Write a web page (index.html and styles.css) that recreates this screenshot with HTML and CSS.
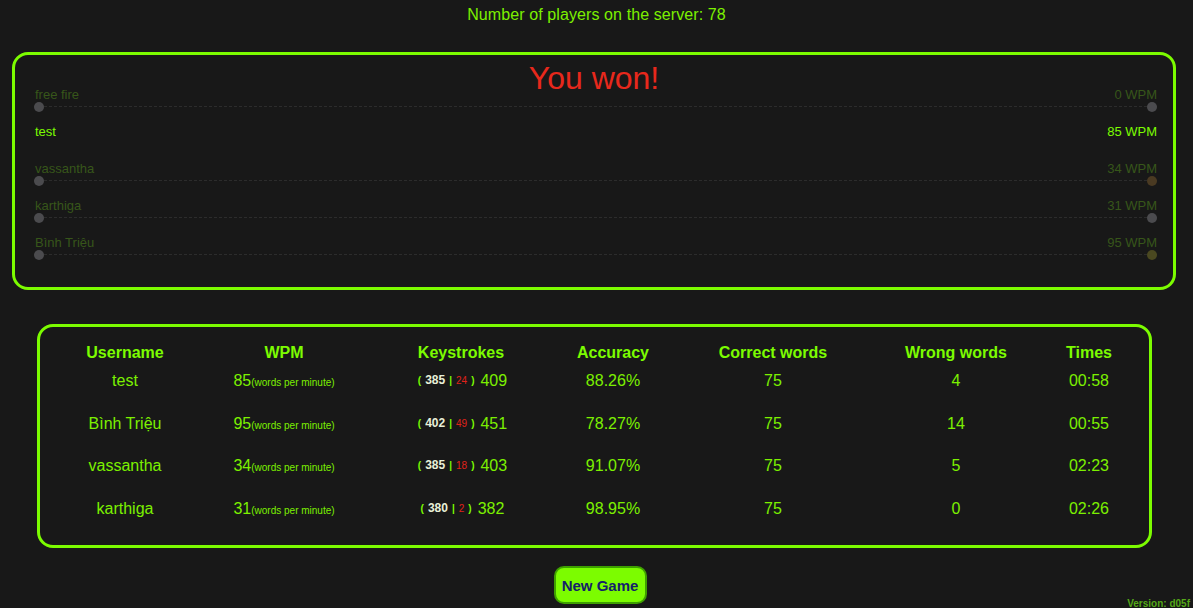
FILE: index.html
```html
<!DOCTYPE html>
<html>
<head>
<meta charset="utf-8">
<link rel="stylesheet" href="styles.css">
</head>
<body>
<div class="page">
  <header class="players">Number of players on the server: 78</header>

  <section class="race">
    <div class="won">You won!</div>
    <div class="lane dim">
      <div class="lane-head"><span>free fire</span><span>0 WPM</span></div>
      <div class="track"><span class="dot grey"></span><span class="dot grey"></span></div>
    </div>
    <div class="lane me">
      <div class="lane-head"><span>test</span><span>85 WPM</span></div>
    </div>
    <div class="lane dim">
      <div class="lane-head"><span>vassantha</span><span>34 WPM</span></div>
      <div class="track"><span class="dot grey"></span><span class="dot brown"></span></div>
    </div>
    <div class="lane dim">
      <div class="lane-head"><span>karthiga</span><span>31 WPM</span></div>
      <div class="track"><span class="dot grey"></span><span class="dot grey"></span></div>
    </div>
    <div class="lane dim">
      <div class="lane-head"><span>Bình Triệu</span><span>95 WPM</span></div>
      <div class="track"><span class="dot grey"></span><span class="dot olive"></span></div>
    </div>
  </section>

  <section class="results">
    <table class="stats">
      <colgroup>
        <col class="c-user"><col class="c-wpm"><col class="c-keys"><col class="c-acc"><col class="c-correct"><col class="c-wrong"><col class="c-time">
      </colgroup>
      <thead>
        <tr><th>Username</th><th>WPM</th><th>Keystrokes</th><th>Accuracy</th><th>Correct words</th><th>Wrong words</th><th>Times</th></tr>
      </thead>
      <tbody>
        <tr>
          <td>test</td>
          <td>85<small>(words per minute)</small></td>
          <td><span class="ks"><i>(</i><b>385</b><i>|</i><em>24</em><i>)</i></span>409</td>
          <td>88.26%</td><td>75</td><td>4</td><td>00:58</td>
        </tr>
        <tr>
          <td>Bình Triệu</td>
          <td>95<small>(words per minute)</small></td>
          <td><span class="ks"><i>(</i><b>402</b><i>|</i><em>49</em><i>)</i></span>451</td>
          <td>78.27%</td><td>75</td><td>14</td><td>00:55</td>
        </tr>
        <tr>
          <td>vassantha</td>
          <td>34<small>(words per minute)</small></td>
          <td><span class="ks"><i>(</i><b>385</b><i>|</i><em>18</em><i>)</i></span>403</td>
          <td>91.07%</td><td>75</td><td>5</td><td>02:23</td>
        </tr>
        <tr>
          <td>karthiga</td>
          <td>31<small>(words per minute)</small></td>
          <td><span class="ks"><i>(</i><b>380</b><i>|</i><em>2</em><i>)</i></span>382</td>
          <td>98.95%</td><td>75</td><td>0</td><td>02:26</td>
        </tr>
      </tbody>
    </table>
  </section>

  <div class="actions">
    <button class="new-game">New Game</button>
  </div>
  <div class="version">Version: d05f</div>
</div>
</body>
</html>
```

FILE: styles.css
```css
html, body {
  margin: 0;
  padding: 0;
  background: #181818;
  height: 100%;
  overflow: hidden;
}
body {
  font-family: "Liberation Sans", Arial, sans-serif;
  color: #7cfc00;
}
.page {
  position: relative;
  height: 608px;
}
.players {
  text-align: center;
  font-size: 16px;
  line-height: 18px;
  padding-top: 6px;
  height: 52px;
  box-sizing: border-box;
  color: #7cf000;
  letter-spacing: 0.1px;
}
.race {
  position: relative;
  margin: 0 17px 0 12px;
  height: 238px;
  box-sizing: border-box;
  border: 3px solid #7cfc00;
  border-radius: 16px;
  padding: 32px 16px 0 19px;
}
.won {
  position: absolute;
  left: 0;
  right: 0;
  top: 3px;
  text-align: center;
  color: #e8281c;
  font-size: 32px;
  line-height: 40px;
}
.lane {
  height: 37px;
}
.lane-head {
  display: flex;
  justify-content: space-between;
  font-size: 13px;
  line-height: 16px;
  padding-left: 1px;
}
.lane.dim .lane-head {
  color: #37561a;
}
.lane.me .lane-head {
  color: #7cfc00;
}
.track {
  position: relative;
  margin-top: -1px;
  height: 10px;
  display: flex;
  justify-content: space-between;
  align-items: center;
}
.track::before {
  content: "";
  position: absolute;
  left: 0;
  right: 0;
  top: 4px;
  border-top: 1px dashed #2c2c2c;
}
.dot {
  position: relative;
  width: 10px;
  height: 10px;
  border-radius: 50%;
}
.dot.grey { background: #4b4b4e; }
.dot.brown { background: #4a3a22; }
.dot.olive { background: #4a4820; }

.results {
  margin: 34px 41px 0 37px;
  height: 224px;
  box-sizing: border-box;
  border: 3px solid #7cfc00;
  border-radius: 16px;
  padding: 15px 13px 0 20px;
}
.stats {
  border-collapse: collapse;
  table-layout: fixed;
  width: 1070px;
}
.c-user { width: 130px; }
.c-wpm { width: 188px; }
.c-keys { width: 166px; }
.c-acc { width: 138px; }
.c-correct { width: 182px; }
.c-wrong { width: 184px; }
.c-time { width: 82px; }
.stats th {
  font-size: 16px;
  font-weight: bold;
  height: 22px;
  padding: 0;
  text-align: center;
  color: #7cfc00;
}
.stats td {
  font-size: 16px;
  text-align: center;
  padding: 0;
  color: #7cf000;
  white-space: nowrap;
  vertical-align: bottom;
  padding-bottom: 6px;
}
.stats tbody tr:first-child td {
  height: 26px;
}
.stats tbody tr:not(:first-child) td {
  height: 36.5px;
}
.stats small {
  font-size: 10px;
}
.ks {
  font-size: 10px;
  margin-right: 3px;
  position: relative;
  top: -2px;
}
.ks i {
  font-style: normal;
  font-weight: bold;
  color: #7cfc00;
  margin: 0 3px;
}
.ks b {
  font-size: 12px;
  color: #e8f0d8;
  margin: 0 1px;
}
.ks em {
  font-style: normal;
  color: #e0221a;
  margin: 0 1px;
}
.actions {
  display: flex;
  justify-content: center;
  margin-top: 18px;
}
.new-game {
  width: 93px;
  height: 38px;
  background: #7cfc00;
  border: 2px solid #3ea000;
  border-radius: 10px;
  color: #14206a;
  font-family: "Liberation Sans", Arial, sans-serif;
  font-weight: bold;
  font-size: 15px;
  padding: 0;
  margin-left: 7px;
}
.version {
  position: absolute;
  right: 3px;
  bottom: -1px;
  font-size: 10px;
  font-weight: bold;
  color: #55a818;
}
```
